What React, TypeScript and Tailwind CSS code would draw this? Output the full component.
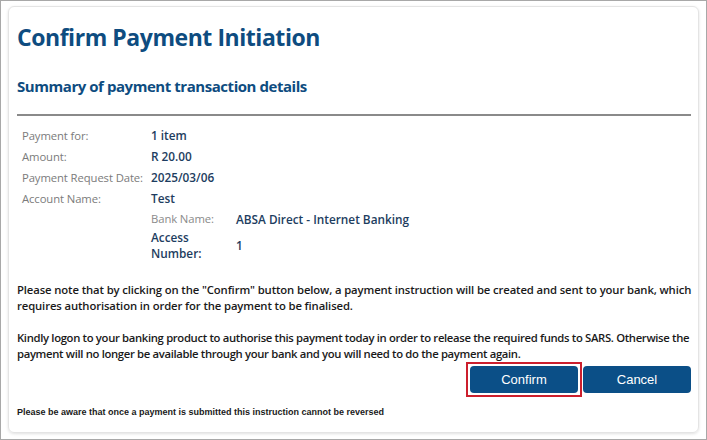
import React from 'react';

const rows = [
  { label: 'Payment for:', value: '1 item' },
  { label: 'Amount:', value: 'R 20.00' },
  { label: 'Payment Request Date:', value: '2025/03/06' },
  { label: 'Account Name:', value: 'Test' },
];

const App: React.FC = () => {
  return (
    <div className="w-[707px] h-[440px] border border-[#a8a8a8] bg-white pl-[7px] pt-[5px] font-['Open_Sans',sans-serif]">
      <div className="w-[691px] h-[427px] rounded-md border border-[#e4e4e4] shadow-[0_1px_3px_rgba(0,0,0,0.12)] px-[8px]">
        <h1 className="mt-[14px] text-[23px] leading-[32px] font-bold text-[#0e4c80] tracking-[-0.45px]">
          Confirm Payment Initiation
        </h1>
        <h2 className="mt-[21px] text-[15px] leading-[24px] font-bold text-[#0e4c80] tracking-[-0.45px]">
          Summary of payment transaction details
        </h2>
        <div className="mt-[16px] h-[2px] w-[674px] bg-[#8a8a8a]" />

        <div className="mt-[9px] pl-[5px]">
          {rows.map((r) => (
            <div key={r.label} className="flex leading-[21px] whitespace-nowrap">
              <div className="w-[129px] text-[11.3px] text-[#7b7b7b] tracking-[-0.1px]">{r.label}</div>
              <div className="text-[11.8px] font-semibold text-[#1d3d60]">{r.value}</div>
            </div>
          ))}
          <div className="ml-[129px]">
            <div className="flex leading-[20px] whitespace-nowrap">
              <div className="w-[85px] text-[11.3px] text-[#8a8a8a] tracking-[-0.1px]">Bank Name:</div>
              <div className="text-[11.8px] font-semibold text-[#1d3d60]">ABSA Direct - Internet Banking</div>
            </div>
            <div className="flex items-center leading-[16px] text-[11.8px] font-semibold text-[#1d3d60]">
              <div className="w-[85px]">
                Access
                <br />
                Number:
              </div>
              <div>1</div>
            </div>
          </div>
        </div>

        <div className="mt-[21px] text-[11.3px] leading-[16px] font-semibold text-[#1a1a1a] whitespace-nowrap">
          <p className="tracking-[-0.12px]">
            Please note that by clicking on the "Confirm" button below, a payment instruction will be created and sent to
            your bank, which
            <br />
            requires authorisation in order for the payment to be finalised.
          </p>
          <p className="mt-[16px] tracking-[-0.34px]">
            Kindly logon to your banking product to authorise this payment today in order to release the required funds to
            SARS. Otherwise the
            <br />
            payment will no longer be available through your bank and you will need to do the payment again.
          </p>
        </div>

        <div className="flex items-center justify-end gap-[1px] -mr-[1px] font-['Liberation_Sans',Arial,sans-serif]">
          <div className="border-2 border-[#cc1f2d] p-[2px]">
            <button className="block w-[108px] h-[27px] rounded-[4px] bg-[#0b4f87] text-white text-[13px]">
              Confirm
            </button>
          </div>
          <button className="w-[108px] h-[27px] rounded-[4px] bg-[#0b4f87] text-white text-[13px]">Cancel</button>
        </div>

        <p className="mt-[9px] text-[9px] leading-[12px] font-bold text-[#1a1a1a] font-['Liberation_Sans',Arial,sans-serif]">
          Please be aware that once a payment is submitted this instruction cannot be reversed
        </p>
      </div>
    </div>
  );
};

export default App;
